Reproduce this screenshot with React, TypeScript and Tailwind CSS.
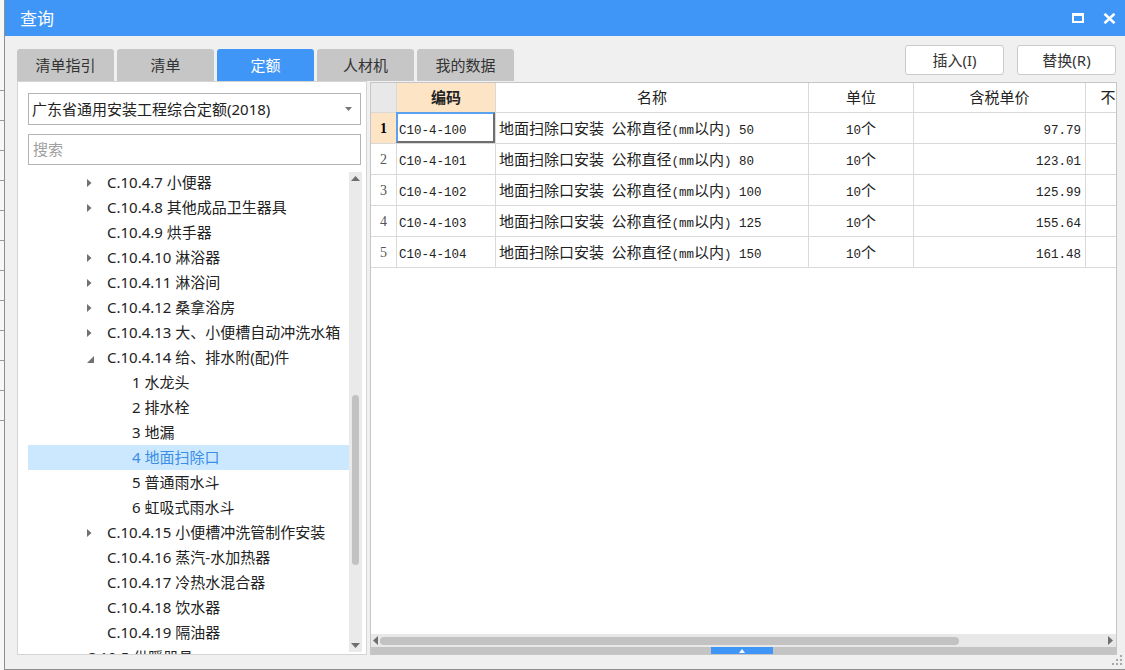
import React from "react";

const ui = "font-['Noto_Sans','Noto_Sans_CJK_SC',sans-serif]";

type Node = { lvl: number; arrow?: "c" | "o"; text: string; sel?: boolean };

const tree: Node[] = [
  { lvl: 2, arrow: "c", text: "C.10.4.7 小便器" },
  { lvl: 2, arrow: "c", text: "C.10.4.8 其他成品卫生器具" },
  { lvl: 2, text: "C.10.4.9 烘手器" },
  { lvl: 2, arrow: "c", text: "C.10.4.10 淋浴器" },
  { lvl: 2, arrow: "c", text: "C.10.4.11 淋浴间" },
  { lvl: 2, arrow: "c", text: "C.10.4.12 桑拿浴房" },
  { lvl: 2, arrow: "c", text: "C.10.4.13 大、小便槽自动冲洗水箱" },
  { lvl: 2, arrow: "o", text: "C.10.4.14 给、排水附(配)件" },
  { lvl: 3, text: "1 水龙头" },
  { lvl: 3, text: "2 排水栓" },
  { lvl: 3, text: "3 地漏" },
  { lvl: 3, text: "4 地面扫除口", sel: true },
  { lvl: 3, text: "5 普通雨水斗" },
  { lvl: 3, text: "6 虹吸式雨水斗" },
  { lvl: 2, arrow: "c", text: "C.10.4.15 小便槽冲洗管制作安装" },
  { lvl: 2, text: "C.10.4.16 蒸汽-水加热器" },
  { lvl: 2, text: "C.10.4.17 冷热水混合器" },
  { lvl: 2, text: "C.10.4.18 饮水器" },
  { lvl: 2, text: "C.10.4.19 隔油器" },
  { lvl: 1, arrow: "c", text: "C.10.5 供暖器具" },
];

const rows = [
  { code: "C10-4-100", name: "地面扫除口安装 公称直径(mm以内) 50", unit: "10个", price: "97.79" },
  { code: "C10-4-101", name: "地面扫除口安装 公称直径(mm以内) 80", unit: "10个", price: "123.01" },
  { code: "C10-4-102", name: "地面扫除口安装 公称直径(mm以内) 100", unit: "10个", price: "125.99" },
  { code: "C10-4-103", name: "地面扫除口安装 公称直径(mm以内) 125", unit: "10个", price: "155.64" },
  { code: "C10-4-104", name: "地面扫除口安装 公称直径(mm以内) 150", unit: "10个", price: "161.48" },
];

function Mixed({ text }: { text: string }) {
  const parts = text.split(/([\u0000-\u00ff]+)/).filter((p) => p.length > 0);
  return (
    <span className="whitespace-pre">
      {parts.map((p, i) =>
        /^[\u0000-\u00ff]+$/.test(p) ? (
          <span key={i} className="font-['Liberation_Mono',monospace] text-[12.5px]">
            {p}
          </span>
        ) : (
          <span key={i} className="font-['Noto_Sans_CJK_SC',sans-serif] text-[15px]">
            {p}
          </span>
        )
      )}
    </span>
  );
}

function Arrow({ kind }: { kind: "c" | "o" }) {
  if (kind === "o")
    return (
      <svg width="7" height="7" viewBox="0 0 7 7" className="mt-[4px]">
        <path d="M7 0 L7 7 L0 7 Z" fill="#707070" />
      </svg>
    );
  return (
    <svg width="5" height="8" viewBox="0 0 5 8">
      <path d="M0 0 L4.5 4 L0 8 Z" fill="#707070" />
    </svg>
  );
}

function LeftStrip() {
  const ys = [0, 1, 2, 3, 4, 5, 6, 7, 8, 9, 10, 11];
  return (
    <div className="w-[4px] h-full bg-[#f7f7f7] flex flex-col pt-[90px] gap-[29px]">
      {ys.map((y) => (
        <div key={y} className="h-px w-full bg-[#9a9a9a]" />
      ))}
    </div>
  );
}

function TitleBar() {
  return (
    <div className="h-[36px] shrink-0 bg-[#4096f7] flex items-center justify-between pl-[15px] pr-[9px]">
      <span className="text-white text-[17px] leading-none">查询</span>
      <div className="flex items-center gap-[19px]">
        <svg width="12" height="10" viewBox="0 0 12 10">
          <rect x="1" y="1" width="10" height="8" fill="none" stroke="#fff" strokeWidth="2" />
          <rect x="0" y="0" width="12" height="3" fill="#fff" />
        </svg>
        <svg width="13" height="11" viewBox="0 0 13 11">
          <path d="M1.5 0.8 L11.5 10.2 M11.5 0.8 L1.5 10.2" stroke="#fff" strokeWidth="2.6" />
        </svg>
      </div>
    </div>
  );
}

function Tabs() {
  const tabs = ["清单指引", "清单", "定额", "人材机", "我的数据"];
  return (
    <div className="self-end flex gap-[3px]">
      {tabs.map((t) => (
        <div
          key={t}
          className={
            t === "定额"
              ? "w-[97px] h-[32px] rounded-t-[3px] bg-[#4096f7] text-white text-[15px] flex items-center justify-center"
              : "w-[97px] h-[32px] rounded-t-[3px] bg-[#c6c6c6] text-[#333] text-[15px] flex items-center justify-center"
          }
        >
          {t}
        </div>
      ))}
    </div>
  );
}

function Buttons() {
  return (
    <div className="mt-[9px] mr-[1px] flex gap-[13px]">
      {["插入(I)", "替换(R)"].map((b) => (
        <div
          key={b}
          className="w-[99px] h-[30px] bg-white border border-[#cbcbcb] rounded-[3px] text-[15px] text-[#333] flex items-center justify-center"
        >
          {b}
        </div>
      ))}
    </div>
  );
}

function LeftPanel() {
  return (
    <div className="w-[350px] h-full bg-white border border-[#d4d4d4] flex flex-col">
      <div className="pl-[10px] pr-[5px] pt-[11px] flex flex-col gap-[9px]">
        <div className="h-[32px] border border-[#b4b4b4] flex items-center justify-between pl-[3px] pr-[8px]">
          <span className="text-[15px] text-[#222]">广东省通用安装工程综合定额(2018)</span>
          <svg width="7" height="4" viewBox="0 0 7 4">
            <path d="M0 0 L7 0 L3.5 4 Z" fill="#777" />
          </svg>
        </div>
        <div className="h-[31px] border border-[#b4b4b4] flex items-center pl-[4px]">
          <span className="text-[15px] text-[#a0a0a0]">搜索</span>
        </div>
      </div>
      <div className="flex-1 min-h-0 mt-[5px] pl-[10px] pr-[4px] flex">
        <div className="flex-1 overflow-hidden flex flex-col">
          {tree.map((n, i) => (
            <div
              key={i}
              className={
                n.sel
                  ? "h-[25px] shrink-0 flex items-center bg-[#cce8ff] text-[#3a8ee6]"
                  : "h-[25px] shrink-0 flex items-center text-[#222]"
              }
            >
              <div
                className={
                  n.lvl === 3 ? "w-[104px] shrink-0" : n.lvl === 2 ? "w-[59px] shrink-0" : "w-[38px] shrink-0"
                }
              />
              {n.lvl !== 3 && (
                <div className="w-[20px] shrink-0 flex items-center">{n.arrow && <Arrow kind={n.arrow} />}</div>
              )}
              <span className="text-[15px] whitespace-nowrap">{n.text}</span>
            </div>
          ))}
        </div>
        <div className="w-[13px] my-[2px] bg-[#eaeaea] flex flex-col items-center">
          <svg width="9" height="5" viewBox="0 0 9 5" className="mt-[4px]">
            <path d="M0 5 L4.5 0 L9 5 Z" fill="#6f6f6f" />
          </svg>
          <div className="h-[214px]" />
          <div className="w-[7px] h-[170px] rounded-full bg-[#c2c2c2]" />
          <div className="flex-1" />
          <svg width="9" height="5" viewBox="0 0 9 5" className="mb-[4px]">
            <path d="M0 0 L9 0 L4.5 5 Z" fill="#6f6f6f" />
          </svg>
        </div>
      </div>
    </div>
  );
}

const cell = "shrink-0 h-full border-r border-b border-[#d9d9d9] flex items-center";

function Grid() {
  return (
    <div className="mt-[1px] h-[573px] w-[747px] border border-[#c6c6c6] bg-white flex flex-col">
      <div className="flex-1 min-h-0 overflow-hidden flex flex-col">
        <div className="h-[30px] shrink-0 flex text-[15px] text-[#222]">
          <div className={`${cell} w-[26px] bg-[#e8e8e8]`} />
          <div className={`${cell} w-[99px] bg-[#fde4c5] justify-center font-bold`}>编码</div>
          <div className={`${cell} w-[313px] justify-center`}>名称</div>
          <div className={`${cell} w-[105px] justify-center`}>单位</div>
          <div className={`${cell} w-[172px] justify-center`}>含税单价</div>
          <div className={`${cell} w-[105px] justify-center`}>不含税单价</div>
        </div>
        {rows.map((r, i) => (
          <div key={r.code} className="h-[31px] shrink-0 flex text-[#222]">
            <div
              className={
                i === 0
                  ? `${cell} w-[26px] bg-[#fde4c5] justify-center font-['Liberation_Serif',serif] text-[14px] font-bold text-black`
                  : `${cell} w-[26px] justify-center font-['Liberation_Serif',serif] text-[14px] text-[#555]`
              }
            >
              {i + 1}
            </div>
            <div className={`${cell} w-[99px] pl-[2px] relative`}>
              <Mixed text={r.code} />
              {i === 0 && (
                <div className="absolute left-[-1px] top-[-1px] right-0 bottom-0 border-2 border-t-[#5aa2f0] border-l-[#5aa2f0] border-r-[#6e6e6e] border-b-[#6e6e6e]" />
              )}
            </div>
            <div className={`${cell} w-[313px] pl-[3px]`}>
              <Mixed text={r.name} />
            </div>
            <div className={`${cell} w-[105px] justify-center`}>
              <Mixed text={r.unit} />
            </div>
            <div className={`${cell} w-[172px] justify-end pr-[4px]`}>
              <Mixed text={r.price} />
            </div>
            <div className={`${cell} w-[105px]`} />
          </div>
        ))}
      </div>
      <div className="h-[13px] shrink-0 bg-[#e8e8e8] flex items-center pl-[2px] pr-[3px]">
        <svg width="5" height="9" viewBox="0 0 5 9">
          <path d="M5 0 L0 4.5 L5 9 Z" fill="#6f6f6f" />
        </svg>
        <div className="ml-[2px] w-[579px] h-[8px] rounded-full bg-[#c2c2c2]" />
        <div className="flex-1" />
        <svg width="5" height="9" viewBox="0 0 5 9">
          <path d="M0 0 L5 4.5 L0 9 Z" fill="#6f6f6f" />
        </svg>
      </div>
      <div className="h-[7px] shrink-0 bg-[#c4c4c4] flex">
        <div className="w-[340px]" />
        <div className="w-[62px] h-full bg-[#4096f7] flex items-center justify-center">
          <svg width="6" height="4" viewBox="0 0 6 4">
            <path d="M0 4 L3 0 L6 4 Z" fill="#fff" />
          </svg>
        </div>
      </div>
    </div>
  );
}

function Grip() {
  const dots = [
    [8, 0],
    [8, 4],
    [4, 4],
    [8, 8],
    [4, 8],
    [0, 8],
  ];
  return (
    <svg width="10" height="10" viewBox="0 0 10 10" className="absolute right-[3px] bottom-[4px]">
      {dots.map(([x, y], i) => (
        <rect key={i} x={x} y={y} width="2" height="2" fill="#a8a8a8" />
      ))}
    </svg>
  );
}

export default function App() {
  return (
    <div className={`w-[1125px] h-[670px] flex bg-[#f0f0f0] overflow-hidden ${ui}`}>
      <LeftStrip />
      <div className="relative flex-1 flex flex-col border-l border-b border-[#8f8f8f] bg-[#f0f0f0]">
        <TitleBar />
        <div className="flex-1 flex flex-col pl-[12px] pr-[8px]">
          <div className="h-[45px] shrink-0 flex justify-between">
            <Tabs />
            <Buttons />
          </div>
          <div className="h-[574px] shrink-0 flex gap-[3px]">
            <LeftPanel />
            <Grid />
          </div>
        </div>
        <Grip />
      </div>
    </div>
  );
}
